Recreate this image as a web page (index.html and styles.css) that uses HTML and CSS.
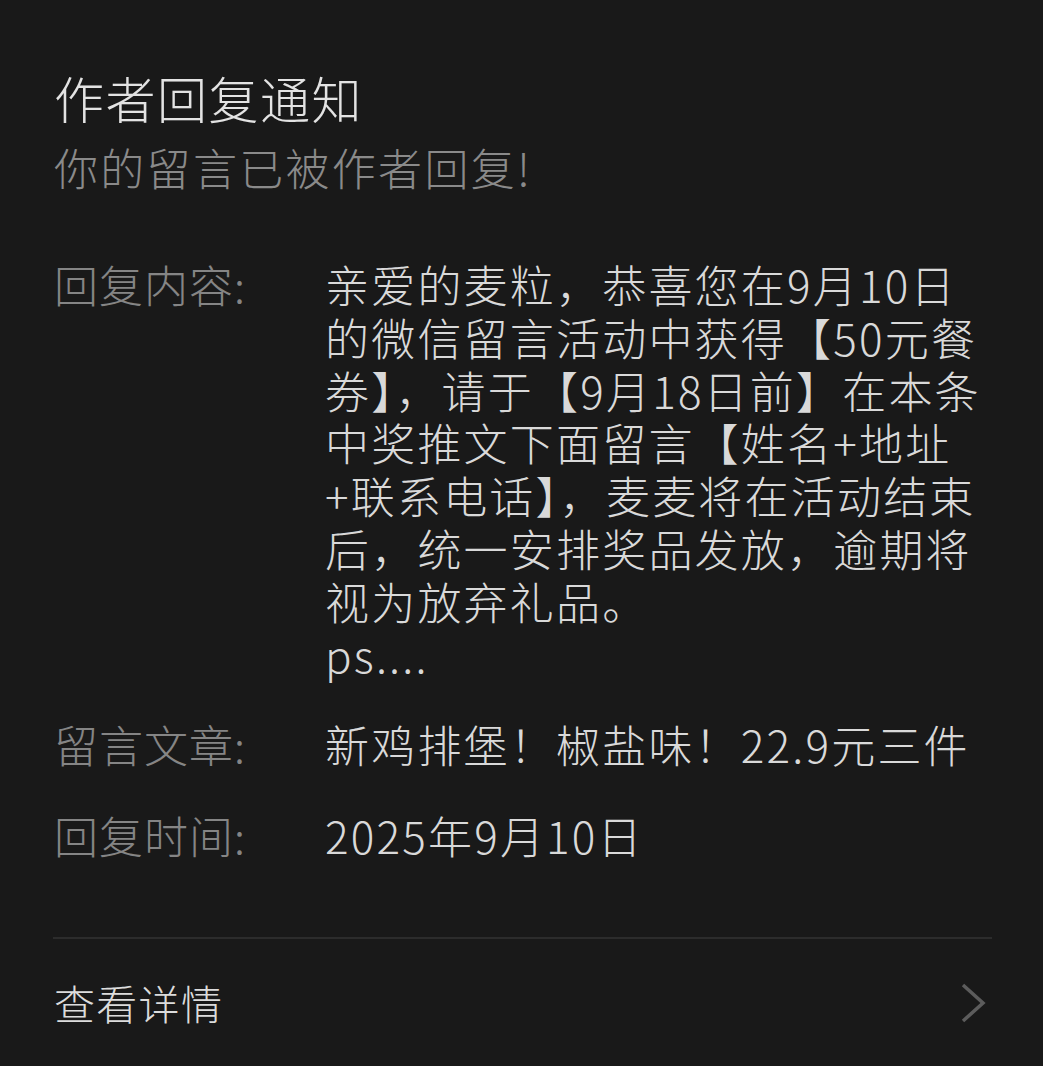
FILE: index.html
```html
<!DOCTYPE html>
<html lang="zh-CN">
<head>
<meta charset="utf-8">
<link rel="stylesheet" href="styles.css">
</head>
<body>
<div class="card">
  <div class="head">
    <div class="title">作者回复通知</div>
    <div class="subtitle">你的留言已被作者回复!</div>
  </div>
  <div class="rows">
    <div class="row">
      <div class="label">回复内容:</div>
      <div class="value">亲爱的麦粒，恭喜您在9月10日<br>的微信留言活动中获得【50元餐<br>券】，请于【9月18日前】在本条<br>中奖推文下面留言【姓名+地址<br>+联系电话】，麦麦将在活动结束<br>后，统一安排奖品发放，逾期将<br>视为放弃礼品。<br>ps....</div>
    </div>
    <div class="row">
      <div class="label">留言文章:</div>
      <div class="value">新鸡排堡！椒盐味！22.9元三件</div>
    </div>
    <div class="row">
      <div class="label">回复时间:</div>
      <div class="value">2025年9月10日</div>
    </div>
  </div>
  <div class="footer">
    <span class="more">查看详情</span>
    <svg class="chev" width="30" height="42" viewBox="0 0 30 42"><path d="M5 3 L25 21 L5 39" fill="none" stroke="#5c5c5c" stroke-width="3.5" stroke-linejoin="miter"/></svg>
  </div>
</div>
</body>
</html>
```

FILE: styles.css
```css
html, body {
  margin: 0;
  padding: 0;
  background: #191919;
}
body {
  font-family: "Noto Sans CJK SC", "Noto Sans", sans-serif;
  font-weight: 300;
  width: 1043px;
  height: 1066px;
  overflow: hidden;
}
.card {
  padding: 67px 51px 0 53px;
}
.title {
  font-size: 50px;
  line-height: 60px;
  letter-spacing: 1.5px;
  color: #e3e3e3;
  padding-left: 1px;
}
.subtitle {
  font-size: 44px;
  line-height: 60px;
  letter-spacing: 2.3px;
  margin-top: 10px;
  color: #8a8a8a;
  padding-left: 1px;
}
.rows {
  margin-top: 61px;
  display: flex;
  flex-direction: column;
  gap: 38px;
}
.row {
  display: flex;
}
.label {
  width: 272px;
  flex: none;
  font-size: 44px;
  line-height: 53px;
  letter-spacing: 1px;
  color: #858585;
  padding-left: 1px;
  box-sizing: border-box;
}
.value {
  font-size: 44px;
  line-height: 52.8px;
  letter-spacing: 2.2px;
  color: #d9d9d9;
  white-space: nowrap;
}
.footer {
  margin-top: 75px;
  border-top: 2px solid #2c2c2c;
  display: flex;
  align-items: center;
  justify-content: space-between;
  height: 126px;
}
.more {
  font-size: 41px;
  letter-spacing: 1.3px;
  color: #dcdcdc;
  padding-left: 1px;
}
.chev {
  margin-right: 4px;
  margin-top: 2px;
}
```
